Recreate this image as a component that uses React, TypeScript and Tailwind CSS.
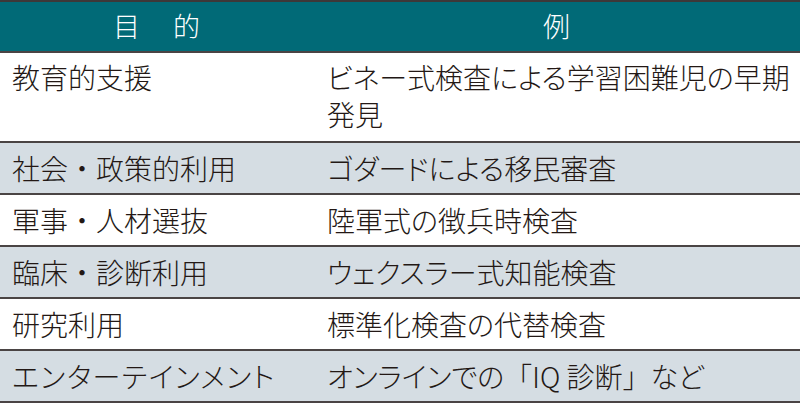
import React from "react";

const W = ({ children }: { children: React.ReactNode }) => (
  <span className="[font-feature-settings:normal]">{children}</span>
);

const rows: { a: React.ReactNode; b: React.ReactNode[]; gray: boolean }[] = [
  { a: "教育的支援", b: ["ビネー式検査による学習困難児の早期", "発見"], gray: false },
  { a: <>社会<W>・</W>政策的利用</>, b: ["ゴダードによる移民審査"], gray: true },
  { a: <>軍事<W>・</W>人材選抜</>, b: ["陸軍式の徴兵時検査"], gray: false },
  { a: <>臨床<W>・</W>診断利用</>, b: ["ウェクスラー式知能検査"], gray: true },
  { a: "研究利用", b: ["標準化検査の代替検査"], gray: false },
  {
    a: <span className="tracking-[1.5px]">エンターテインメント</span>,
    b: [<>オンラインでの<W>「</W>IQ 診断<W>」</W>など</>],
    gray: true,
  },
];

export default function App() {
  return (
    <div className="w-[800px] h-[405px] bg-white text-[#231815] overflow-hidden font-['Noto_Sans_CJK_JP','Noto_Sans',sans-serif]">
      <div className="border-t-2 border-[#3d3838]" />
      <div className="flex h-[51px] bg-[#016a77] text-white text-[27px] font-light border-b-2 border-[#4a4444]">
        <div className="w-[313px] flex items-center justify-center gap-[33px]">
          <span>目</span>
          <span>的</span>
        </div>
        <div className="flex-1 flex items-center justify-center">例</div>
      </div>
      {rows.map((r, i) => (
        <div
          key={i}
          className={`flex text-[28px] font-light border-b-2 border-[#4a4444] [font-feature-settings:'palt'] ${
            r.gray ? "bg-[#d5dde3]" : "bg-white"
          } ${i === 0 ? "h-[90px] items-start pt-[6px]" : "h-[52px] items-center"}`}
        >
          <div className="w-[313px] pl-[12px] leading-[37px] whitespace-nowrap">{r.a}</div>
          <div className="flex-1 pl-[14px] leading-[37px] whitespace-nowrap">
            {r.b.map((l, j) => (
              <div key={j}>{l}</div>
            ))}
          </div>
        </div>
      ))}
    </div>
  );
}
